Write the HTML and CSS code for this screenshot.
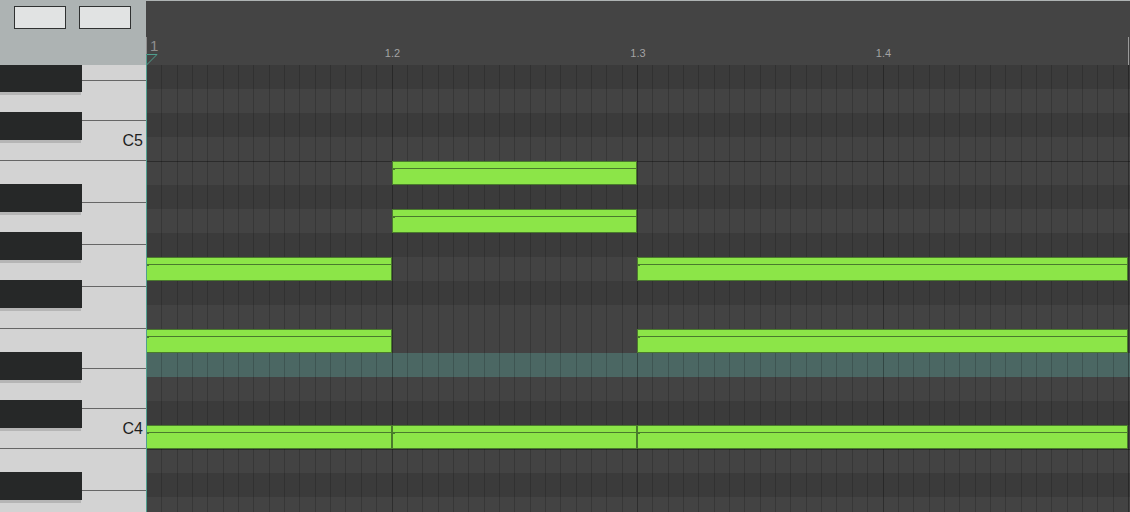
FILE: index.html
```html
<!DOCTYPE html>
<html>
<head>
<meta charset="utf-8">
<link rel="stylesheet" href="styles.css">
</head>
<body>
<div class="app">
  <div class="corner">
    <button class="btn"></button>
    <button class="btn"></button>
  </div>
  <div class="ruler">
    <span class="tick tick-start"></span>
    <span class="tick tick-end"></span>
    <span class="bar-num">1</span>
    <span class="beat-num" style="left:246.5px">1.2</span>
    <span class="beat-num" style="left:492px">1.3</span>
    <span class="beat-num" style="left:737.5px">1.4</span>
    <svg class="marker" width="12" height="12" viewBox="0 0 12 12"><path d="M0.5 11.5 V0.5 H11 L0.5 11" fill="none" stroke="#4f9f8e" stroke-width="1"/></svg>
  </div>
  <div class="piano">
    <div class="wk" style="height:16px"></div>
    <div class="wk k40"></div>
    <div class="wk k40 c-key"><span class="label">C5</span></div>
    <div class="wk k42"></div>
    <div class="wk k42"></div>
    <div class="wk k42"></div>
    <div class="wk k42"></div>
    <div class="wk k40"></div>
    <div class="wk k40"></div>
    <div class="wk k40 c-key"><span class="label">C4</span></div>
    <div class="wk k42"></div>
    <div class="wk k42"></div>
    <div class="bk" style="top:-1px"></div>
    <div class="bk" style="top:47px"></div>
    <div class="bk" style="top:119px"></div>
    <div class="bk" style="top:167px"></div>
    <div class="bk" style="top:215px"></div>
    <div class="bk" style="top:287px"></div>
    <div class="bk" style="top:335px"></div>
    <div class="bk" style="top:407px"></div>
  </div>
  <div class="roll">
    <div class="rows">
      <div class="row dark"></div>
      <div class="row"></div>
      <div class="row dark"></div>
      <div class="row"></div>
      <div class="row octave"></div>
      <div class="row dark"></div>
      <div class="row"></div>
      <div class="row dark"></div>
      <div class="row"></div>
      <div class="row dark"></div>
      <div class="row"></div>
      <div class="row"></div>
      <div class="row hl"></div>
      <div class="row"></div>
      <div class="row dark"></div>
      <div class="row"></div>
      <div class="row octave"></div>
      <div class="row dark"></div>
      <div class="row"></div>
    </div>
    <div class="cols">
      <i class="c beat"></i><i class="c"></i><i class="c"></i><i class="c"></i><i class="c"></i><i class="c"></i><i class="c"></i><i class="c"></i><i class="c"></i><i class="c"></i><i class="c"></i><i class="c"></i><i class="c"></i><i class="c"></i><i class="c"></i><i class="c"></i>
      <i class="c beat"></i><i class="c"></i><i class="c"></i><i class="c"></i><i class="c"></i><i class="c"></i><i class="c"></i><i class="c"></i><i class="c"></i><i class="c"></i><i class="c"></i><i class="c"></i><i class="c"></i><i class="c"></i><i class="c"></i><i class="c"></i>
      <i class="c beat"></i><i class="c"></i><i class="c"></i><i class="c"></i><i class="c"></i><i class="c"></i><i class="c"></i><i class="c"></i><i class="c"></i><i class="c"></i><i class="c"></i><i class="c"></i><i class="c"></i><i class="c"></i><i class="c"></i><i class="c"></i>
      <i class="c beat"></i><i class="c"></i><i class="c"></i><i class="c"></i><i class="c"></i><i class="c"></i><i class="c"></i><i class="c"></i><i class="c"></i><i class="c"></i><i class="c"></i><i class="c"></i><i class="c"></i><i class="c"></i><i class="c"></i><i class="c"></i>
      <i class="end"></i>
    </div>
    <div class="note" style="left:246px;top:96px;width:245px"></div>
    <div class="note" style="left:246px;top:144px;width:245px"></div>
    <div class="note" style="left:0;top:192px;width:246px"></div>
    <div class="note" style="left:491px;top:192px;width:491px"></div>
    <div class="note" style="left:0;top:264px;width:246px"></div>
    <div class="note" style="left:491px;top:264px;width:491px"></div>
    <div class="note" style="left:0;top:360px;width:246px"></div>
    <div class="note" style="left:246px;top:360px;width:245px"></div>
    <div class="note" style="left:491px;top:360px;width:491px"></div>
    <div class="playhead"></div>
  </div>
</div>
</body>
</html>
```

FILE: styles.css
```css
* { box-sizing: border-box; }
html, body { margin: 0; padding: 0; }
body {
  width: 1130px;
  height: 512px;
  overflow: hidden;
  font-family: "Liberation Sans", Arial, sans-serif;
  background: #434343;
}
.app {
  display: grid;
  grid-template-columns: 146px 984px;
  grid-template-rows: 65px 447px;
  width: 1130px;
  height: 512px;
  overflow: hidden;
}
.corner {
  background: #adb3b3;
  display: flex;
  align-items: flex-start;
  gap: 13px;
  padding: 6px 0 0 14px;
}
.btn {
  width: 52px;
  height: 23px;
  margin: 0;
  padding: 0;
  border: 1px solid #2f3131;
  background: #e1e3e3;
  border-radius: 0;
}
.ruler {
  position: relative;
  background: #444444;
  box-shadow: inset 0 1px 0 #aeb3b3;
}
.tick {
  position: absolute;
  width: 1px;
  background: #8e8e8e;
}
.tick-start { left: 0; top: 37px; height: 17px; }
.tick-end { left: 982px; top: 37px; height: 28px; background: #9a9a9a; }
.bar-num {
  position: absolute;
  left: 4px;
  top: 38px;
  font-size: 15px;
  line-height: 15px;
  color: #8f8f8f;
}
.beat-num {
  position: absolute;
  top: 48px;
  font-size: 11px;
  line-height: 11px;
  color: #a3a3a3;
  transform: translateX(-50%);
}
.marker {
  position: absolute;
  left: 0;
  top: 54px;
  display: block;
}
.piano {
  position: relative;
  background: #d3d3d3;
  display: flex;
  flex-direction: column;
  overflow: hidden;
}
.wk {
  flex: none;
  border-bottom: 1px solid #666666;
}
.k40 { height: 40px; }
.k42 { height: 42px; }
.c-key {
  display: flex;
  align-items: center;
  justify-content: flex-end;
  padding-right: 3px;
}
.label {
  font-size: 16px;
  color: #1e1e1e;
  line-height: 16px;
}
.bk {
  position: absolute;
  left: 0;
  width: 82px;
  height: 28px;
  background: #262828;
}
.bk::after {
  content: "";
  position: absolute;
  left: 0;
  top: 28px;
  width: 81px;
  height: 3px;
  background: #b5b5b5;
}
.roll {
  position: relative;
  overflow: hidden;
  background: #434343;
}
.rows {
  display: flex;
  flex-direction: column;
}
.row {
  flex: none;
  height: 24px;
  background: #434343;
}
.row.dark { background: #3b3b3b; }
.row.hl { background: #4b6763; }
.row.octave { border-top: 1px solid #2b2b2b; }
.cols {
  position: absolute;
  left: 0;
  top: 0;
  bottom: 0;
  width: 983px;
  display: flex;
}
.c {
  flex: 1 1 0;
  border-left: 1px solid rgba(0, 0, 0, 0.17);
}
.c.beat { border-left-color: rgba(0, 0, 0, 0.32); }
.end {
  flex: none;
  width: 1px;
  background: rgba(0, 0, 0, 0.32);
}
.note {
  position: absolute;
  height: 24px;
  border: 1px solid #4a7a2d;
  background: #8ce548;
}
.note::before {
  content: "";
  position: absolute;
  left: 0;
  right: 0;
  top: 6px;
  height: 1px;
  background: #4a7a2d;
}
.note::after {
  content: "";
  position: absolute;
  left: 0;
  top: 7px;
  width: 2px;
  height: 1px;
  background: #4a7a2d;
}
.playhead {
  position: absolute;
  left: 0;
  top: 0;
  bottom: 0;
  width: 1px;
  background: #4f9f8e;
}
```
